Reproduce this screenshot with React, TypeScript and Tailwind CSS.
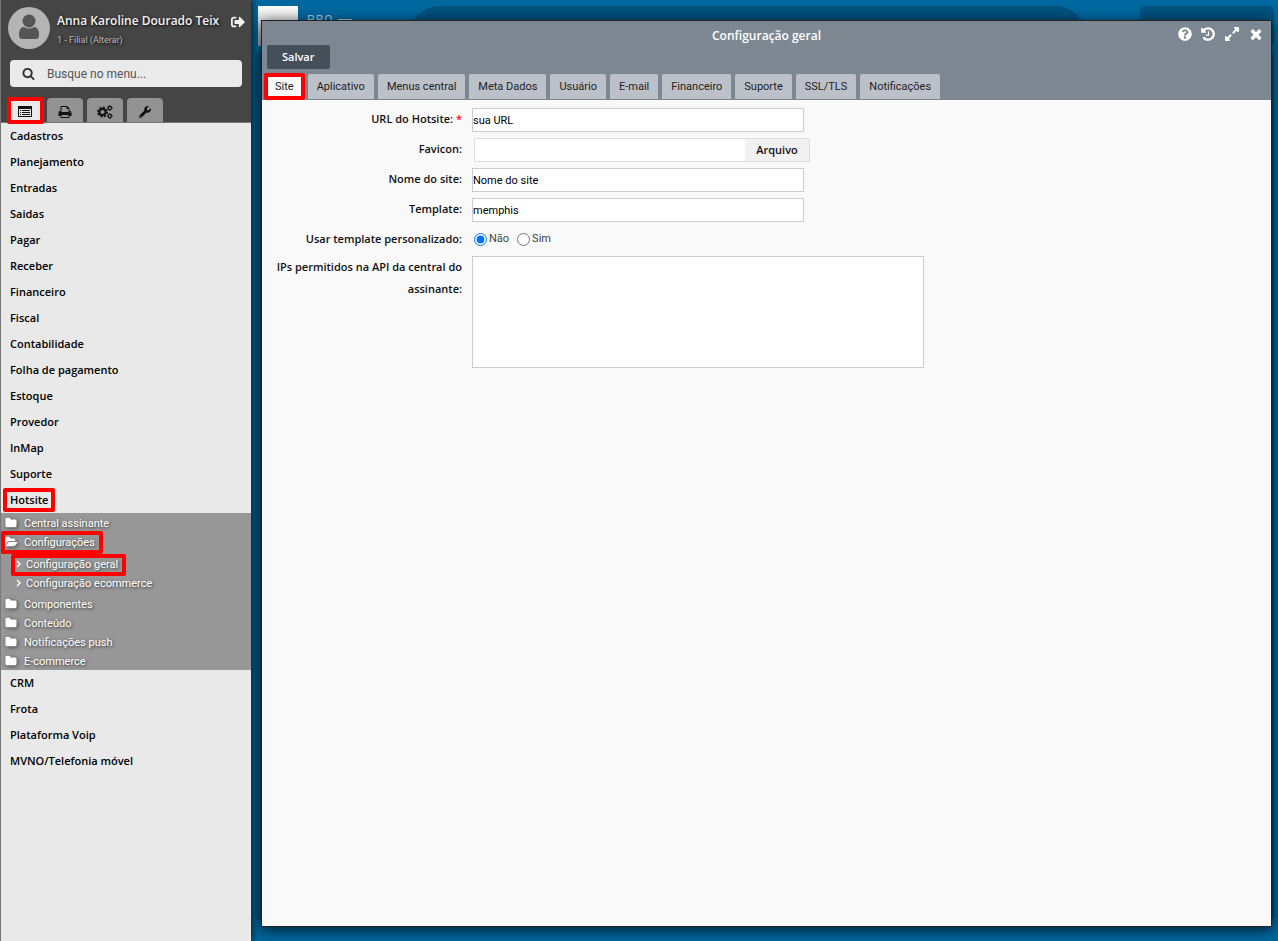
import type { ReactNode } from 'react';
import { FaExpandAlt, FaQuestionCircle, FaSignOutAlt, FaWrench } from 'react-icons/fa';

const paths = {
  search: 'M1216 832q0-185-131.5-316.5t-316.5-131.5-316.5 131.5-131.5 316.5 131.5 316.5 316.5 131.5 316.5-131.5 131.5-316.5zm512 832q0 52-38 90t-90 38q-54 0-90-38l-343-342q-179 124-399 124-143 0-273.5-55.5t-225-150-150-225-55.5-273.5 55.5-273.5 150-225 225-150 273.5-55.5 273.5 55.5 225 150 150 225 55.5 273.5q0 220-124 399l343 343q37 37 37 90z',
  list: 'M0 128h1792v1408h-1792zM128 512v896h1536v-896zM256 640h128v128h-128zM512 640h1024v128h-1024zM256 896h128v128h-128zM512 896h1024v128h-1024zM256 1152h128v128h-128zM512 1152h1024v128h-1024z',
  print: 'M448 1536h896v-256h-896v256zm0-640h896v-384h-160q-40 0-68-28t-28-68v-160h-640v640zm1152 64q0-26-19-45t-45-19-45 19-19 45 19 45 45 19 45-19 19-45zm128 0v416q0 13-9.5 22.5t-22.5 9.5h-224v160q0 40-28 68t-68 28h-960q-40 0-68-28t-28-68v-160h-224q-13 0-22.5-9.5t-9.5-22.5v-416q0-79 56.5-135.5t135.5-56.5h64v-544q0-40 28-68t68-28h672q40 0 88 20t76 48l152 152q28 28 48 76t20 88v256h64q79 0 135.5 56.5t56.5 135.5z',
  folder: 'M1728 608v704q0 92-66 158t-158 66h-1216q-92 0-158-66t-66-158v-960q0-92 66-158t158-66h320q92 0 158 66t66 158v32h672q92 0 158 66t66 158z',
  folderOpen: 'M1879 952q0 31-31 66l-336 396q-43 51-120.5 86.5t-143.5 35.5h-1088q-34 0-60.5-13t-26.5-43q0-31 31-66l336-396q43-51 120.5-86.5t143.5-35.5h1088q34 0 60.5 13t26.5 43zm-343-344v160h-832q-94 0-197 47.5t-164 119.5l-337 396-5 6q0-4-.5-12.5t-.5-12.5v-960q0-92 66-158t158-66h320q92 0 158 66t66 158v32h544q92 0 158 66t66 158z',
  history: 'M1664 896q0 156-61 298t-164 245-245 164-298 61q-172 0-327-72.5t-264-204.5q-7-10-6.5-22.5t8.5-20.5l137-138q10-9 25-9 16 2 23 12 73 95 179 147t225 52q104 0 198.5-40.5t163.5-109.5 109.5-163.5 40.5-198.5-40.5-198.5-109.5-163.5-163.5-109.5-198.5-40.5q-98 0-188 35.5t-160 101.5l137 138q31 30 14 69-17 40-59 40h-448q-26 0-45-19t-19-45v-448q0-42 40-59 39-17 69 14l130 129q107-101 244.5-156.5t284.5-55.5q156 0 298 61t245 164 164 245 61 298zm-640-288v448q0 14-9 23t-23 9h-320q-14 0-23-9t-9-23v-64q0-14 9-23t23-9h224v-352q0-14 9-23t23-9h64q14 0 23 9t9 23z',
  times: 'M1490 1322q0 40-28 68l-136 136q-28 28-68 28t-68-28l-294-294-294 294q-28 28-68 28t-68-28l-136-136q-28-28-28-68t28-68l294-294-294-294q-28-28-28-68t28-68l136-136q28-28 68-28t68 28l294 294 294-294q28-28 68-28t68 28l136 136q28 28 28 68t-28 68l-294 294 294 294q28 28 28 68z',
};

function Icon({ name, className }: { name: keyof typeof paths; className: string }) {
  return (
    <svg viewBox="0 0 1792 1792" fill="currentColor" fillRule="evenodd" className={`overflow-visible ${className}`} aria-hidden="true">
      <path d={paths[name]} />
    </svg>
  );
}

function Cogs() {
  return (
    <svg viewBox="0 0 16 16" fill="none" stroke="currentColor" className="size-4" aria-hidden="true">
      <circle cx="5.5" cy="8" r="3.2" strokeWidth="2.2" />
      <circle cx="5.5" cy="8" r="4.6" strokeWidth="1.8" strokeDasharray="1.8 1.81" />
      <circle cx="12.8" cy="4" r="1.6" strokeWidth="1.1" />
      <circle cx="12.8" cy="4" r="2.4" strokeWidth="1" strokeDasharray="1 .88" />
      <circle cx="12.8" cy="12" r="1.6" strokeWidth="1.1" />
      <circle cx="12.8" cy="12" r="2.4" strokeWidth="1" strokeDasharray="1 .88" />
    </svg>
  );
}

// red frame drawn over the highlighted steps
function Mark({ className }: { className: string }) {
  return <span className={`pointer-events-none absolute z-10 rounded-xs border-4 border-[#fe0000] ${className}`} />;
}

const menuTop = ['Cadastros', 'Planejamento', 'Entradas', 'Saidas', 'Pagar', 'Receber', 'Financeiro', 'Fiscal', 'Contabilidade', 'Folha de pagamento', 'Estoque', 'Provedor', 'InMap', 'Suporte', 'Hotsite'];
const menuBottom = ['CRM', 'Frota', 'Plataforma Voip', 'MVNO/Telefonia móvel'];
const folders = ['Componentes', 'Conteúdo', 'Notificações push', 'E-commerce'];
const tabs = ['Site', 'Aplicativo', 'Menus central', 'Meta Dados', 'Usuário', 'E-mail', 'Financeiro', 'Suporte', 'SSL/TLS', 'Notificações'];

const sideTabs = [
  { label: 'Menu', icon: <Icon name="list" className="size-3.5" /> },
  { label: 'Relatórios', icon: <Icon name="print" className="size-3.5" /> },
  { label: 'Configurações', icon: <Cogs /> },
  { label: 'Ferramentas', icon: <FaWrench className="size-3" /> },
];

const strong = "font-['Open_Sans','Noto_Sans',sans-serif] font-semibold";

function MenuItem({ label }: { label: string }) {
  return (
    <li>
      <a href="#" className={`flex h-[26px] items-center px-[9px] text-black ${strong}`}>
        <span className="relative">
          {label}
          {label === 'Hotsite' && <Mark className="-inset-x-[7px] -inset-y-1" />}
        </span>
      </a>
    </li>
  );
}

function Folder({ label, open }: { label: string; open?: boolean }) {
  return (
    <a href="#" className="relative flex h-[19px] items-center gap-[7px] pt-1 pl-1">
      <Icon name={open ? 'folderOpen' : 'folder'} className="mb-1 size-3 drop-shadow-[1px_1px_2px_#444]" />
      {label}
      {open && <Mark className="-top-px left-0 h-[23px] w-[102px]" />}
    </a>
  );
}

function SubItem({ label, marked }: { label: string; marked?: boolean }) {
  return (
    <a href="#" className="relative flex h-[19px] items-center gap-1 pt-1 pl-[15px]">
      <svg viewBox="0 0 6 8" className="mb-1 h-2 w-1.5" fill="none" stroke="currentColor" strokeWidth="1.4" aria-hidden="true">
        <path d="M1 1l3 3-3 3" />
      </svg>
      {label}
      {marked && <Mark className="top-0 left-2.5 h-[22px] w-[115px]" />}
    </a>
  );
}

function Sidebar() {
  return (
    <aside className="relative z-10 flex w-[251px] shrink-0 flex-col border-l border-[#777] bg-[#e9e9e9] shadow-[2px_0_6px_rgba(0,0,0,0.6)]">
      <div className="bg-[#454545]">
        <div className="flex items-start pt-[7px] pr-[6px] pl-[7px] text-[#f2f2f2]">
          <svg viewBox="0 0 42 42" className="size-[42px] shrink-0" aria-hidden="true">
            <circle cx="21" cy="21" r="21" fill="#b4b4b4" />
            <circle cx="21" cy="14" r="6.5" fill="#555" />
            <path d="M11 28q0-8 5-8 5 3 10 0 5 0 5 8 0 4-3 4H14q-3 0-3-4z" fill="#555" />
          </svg>
          <div className="min-w-0 flex-1 pt-1 pl-[7px] [text-shadow:1px_1px_3px_#000]">
            <p className={`text-xs leading-[19px] whitespace-nowrap ${strong}`}>Anna Karoline Dourado Teix</p>
            <a href="#" className="block text-[9px] leading-[20px] text-[#bbb]">1 - Filial (Alterar)</a>
          </div>
          <button aria-label="Sair" className="pt-2"><FaSignOutAlt className="size-3.5" /></button>
        </div>
        <label className="mx-[9px] mt-2.5 flex h-[27px] items-center gap-3 rounded bg-[#eaeaea] px-3">
          <Icon name="search" className="size-[13px] shrink-0 text-[#333]" />
          <input aria-label="Busque no menu" placeholder="Busque no menu..." className="w-full min-w-0 text-xs text-[#444] outline-none placeholder:text-[#555]" />
        </label>
        <div className="mt-[11px] flex gap-1 border-b border-[#777] pl-[6px]">
          {sideTabs.map((t, i) => (
            <button key={t.label} aria-label={t.label} className={`relative flex h-6 w-9 items-center justify-center rounded-t-sm pt-1 text-[#111] ${i === 0 ? 'bg-[#e9e9e9]' : 'bg-[#929292]'}`}>
              {t.icon}
              {i === 0 && <Mark className="-top-px -right-px -bottom-0.5 left-0" />}
            </button>
          ))}
        </div>
      </div>
      <ul>{menuTop.map(m => <MenuItem key={m} label={m} />)}</ul>
      <div className="bg-[#979797] text-white [text-shadow:1px_1px_3px_#333]">
        <Folder label="Central assinante" />
        <Folder label="Configurações" open />
        <div className="mt-[3px] mb-0.5">
          <SubItem label="Configuração geral" marked />
          <SubItem label="Configuração ecommerce" />
        </div>
        {folders.map(f => <Folder key={f} label={f} />)}
      </div>
      <ul>{menuBottom.map(m => <MenuItem key={m} label={m} />)}</ul>
    </aside>
  );
}

function Row({ label, id, required, children }: { label: string; id?: string; required?: boolean; children: ReactNode }) {
  return (
    <div className="flex gap-2.5">
      <label htmlFor={id} className={`w-[200px] shrink-0 text-right leading-[22px] text-[#111] ${strong}`}>
        {label}{required && <span className="text-[#f00]"> *</span>}
      </label>
      {children}
    </div>
  );
}

const inputStyle = 'h-6 w-[332px] border border-[#ccc] bg-white text-black outline-none';

export default function App() {
  return (
    <div className="flex min-h-screen bg-[#00689f] font-[Roboto,'Noto_Sans',sans-serif] text-[11px]">
      <Sidebar />
      <main className="relative flex min-w-0 flex-1 overflow-hidden pt-5 pr-1.5 pb-3.5 pl-2.5">
        {/* dashboard behind the window */}
        <div className="absolute top-1.5 left-[7px] h-10 w-10 bg-linear-to-b from-white to-[#aaa]" />
        <p className="absolute top-3 left-14 flex gap-1 text-xs tracking-widest text-[#a9c9dc]">
          PRO <span className="mt-[7px] h-px w-3.5 bg-[#a9c9dc]" />
        </p>
        <div className="absolute top-1.5 right-[191px] left-[157px] h-16 rounded-full bg-[#00527f]" />
        <div className="absolute top-1.5 right-1 h-10 w-[134px] rounded-md bg-[#00527f]" />
        <div className="absolute inset-x-1 top-[52px] bottom-5 rounded-md bg-[#00527f]" />

        <section className="relative flex min-w-0 flex-1 flex-col border border-[#222] bg-[#f9f9f9] shadow-[0_3px_14px_rgba(0,0,0,0.75)]">
          <header className="bg-[#7d8791]">
            <div className="relative">
              <h1 className={`pt-1.5 text-center text-xs leading-[18px] text-white ${strong}`}>Configuração geral</h1>
              <div className="absolute top-[5px] right-[7px] flex items-center gap-2 text-white">
                <button aria-label="Ajuda"><FaQuestionCircle className="size-3.5" /></button>
                <button aria-label="Histórico"><Icon name="history" className="size-4" /></button>
                <button aria-label="Expandir"><FaExpandAlt className="size-4" /></button>
                <button aria-label="Fechar"><Icon name="times" className="size-4" /></button>
              </div>
            </div>
            <div className="flex pl-[5px]">
              <button className={`h-6 rounded-xs bg-[#444f5a] px-[15px] text-white ${strong}`}>Salvar</button>
            </div>
            <div role="tablist" className="mt-[5px] flex gap-1 border-b border-[#7d8791] pl-[3px]">
              {tabs.map((t, i) => (
                <button key={t} role="tab" aria-selected={i === 0} className={`relative h-[25px] rounded-t-xs pt-0.5 text-[#222] ${i === 0 ? 'bg-[#f9f9f9] px-2.5' : 'bg-[#bcc1c9] px-[9px]'}`}>
                  {t}
                  {i === 0 && <Mark className="-inset-x-px -top-px -bottom-px" />}
                </button>
              ))}
            </div>
          </header>

          <form className="flex flex-col gap-1.5 pt-2" onSubmit={e => e.preventDefault()}>
            <Row label="URL do Hotsite:" id="url" required>
              <input id="url" defaultValue="sua URL" className={inputStyle} />
            </Row>
            <Row label="Favicon:" id="favicon">
              <div className="ml-0.5 flex h-6 w-[336px] border border-[#ddd] bg-white">
                <input id="favicon" className="min-w-0 flex-1 outline-none" />
                <button type="button" className={`w-16 bg-[#f1f1f1] text-[#111] ${strong}`}>Arquivo</button>
              </div>
            </Row>
            <Row label="Nome do site:" id="nome">
              <input id="nome" defaultValue="Nome do site" className={inputStyle} />
            </Row>
            <Row label="Template:" id="template">
              <input id="template" defaultValue="memphis" className={inputStyle} />
            </Row>
            <Row label="Usar template personalizado:">
              <div className="flex h-[22px] items-center pl-0.5 text-[#444]">
                <input type="radio" id="nao" name="custom" defaultChecked className="size-[13px]" />
                <label htmlFor="nao" className="mr-2 ml-0.5">Não</label>
                <input type="radio" id="sim" name="custom" className="size-[13px]" />
                <label htmlFor="sim" className="ml-0.5">Sim</label>
              </div>
            </Row>
            <Row label="IPs permitidos na API da central do assinante:" id="ips">
              <textarea id="ips" className="h-28 w-[452px] resize-none border border-[#ccc] bg-white outline-none" />
            </Row>
          </form>
        </section>
      </main>
    </div>
  );
}
